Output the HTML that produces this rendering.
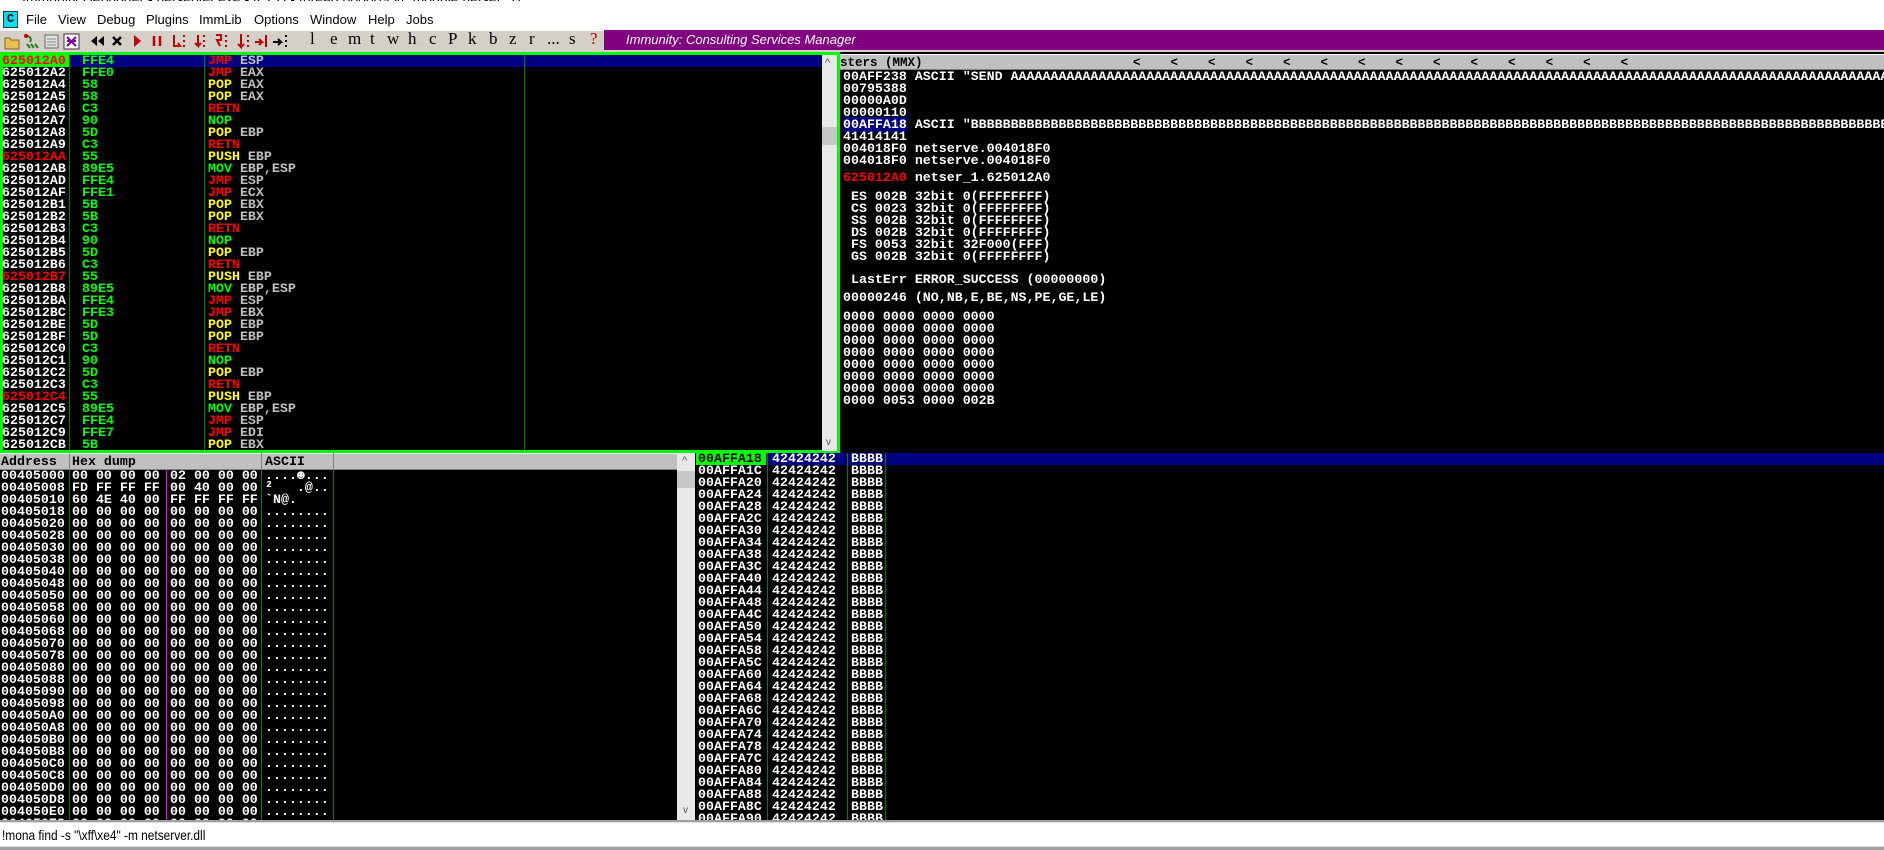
<!DOCTYPE html>
<html><head><meta charset="utf-8"><style>
*{margin:0;padding:0;box-sizing:border-box}
body{width:1884px;height:850px;overflow:hidden;background:#fff;position:relative;font-family:"Liberation Mono",monospace;}
.abs{position:absolute}
.mono{font-family:"Liberation Mono",monospace;font-weight:bold;font-size:13.3px;line-height:12px;white-space:pre;color:#fff}
.lst{white-space:normal}
.r{position:relative;height:12px}
.r b{position:absolute;top:0;font-weight:bold;white-space:pre}
.W{color:#fff}.G{color:#00ff00}.R{color:#ff0000}.Y{color:#ffff00}.L{color:#c0c0c0}
#dis .a{left:2px}#dis .h{left:82px}#dis .i{left:208px}
#hex .a{left:1px}#hex .g1{left:72px}#hex .g2{left:170px}#hex .s{left:265px}
#stk .a{left:698px}#stk .v{left:772px}#stk .t{left:851px}
.menu span{position:absolute;top:12px;font-family:"Liberation Sans",sans-serif;font-size:13px;color:#000}
.tb{position:absolute;top:29px;font-family:"Liberation Serif",serif;font-size:17px;color:#000}
</style></head><body>
<div class="abs" style="left:0;top:-9px;height:10px;width:1884px;overflow:hidden;font-family:'Liberation Sans',sans-serif;font-size:14px;color:#000;line-height:16px;padding-left:22px">Immunity Debugger - netserver.exe - [CPU - thread 00000934, module netser_1]</div>
<div class="abs menu" style="left:0;top:0;width:1884px;height:30px">
<div class="abs" style="left:3px;top:11px;width:15px;height:17px;background:#00e0f0;border:1px solid #333;font:bold 12px 'Liberation Mono';text-align:center;line-height:15px;color:#000">C</div>
<span style="left:26px">File</span><span style="left:58px">View</span><span style="left:97px">Debug</span><span style="left:146px">Plugins</span><span style="left:199px">ImmLib</span><span style="left:254px">Options</span><span style="left:310px">Window</span><span style="left:368px">Help</span><span style="left:406px">Jobs</span>
</div>
<div class="abs" style="left:0;top:30px;width:1884px;height:22px;background:#d4d0c8;border-top:1px solid #fff"></div>
<svg class="abs" style="left:0;top:30px" width="300" height="22">
<path d="M5 8h5l1 2h8v9H5z" fill="#e8c050" stroke="#806020"/>
<path d="M26 6c4 0 6 3 4 6M27 14l3 4M31 14l3 4M35 14l3 4" stroke="#208020" stroke-width="2" fill="none"/><circle cx="26" cy="6" r="2" fill="#c00"/>
<rect x="45" y="5" width="13" height="13" fill="#e0e0e0" stroke="#666"/><path d="M47 9h9M47 12h9M47 15h9" stroke="#888"/>
<rect x="64" y="4" width="15" height="15" fill="#fff" stroke="#333"/><path d="M67 7l9 9M76 7l-9 9M67 11h9" stroke="#8000a0" stroke-width="2"/>
<path d="M97 6l-6 5 6 5zM104 6l-6 5 6 5z" fill="#000"/>
<path d="M113 7l8 8M121 7l-8 8" stroke="#000" stroke-width="2.5"/>
<path d="M134 5l7 6-7 6z" fill="#c00000"/>
<path d="M154 6v10M160 6v10" stroke="#c00000" stroke-width="2.5"/>
<path d="M174 5v11h6l-2-3M184 5v2M184 10v2M184 15v2" stroke="#c00000" stroke-width="2" fill="none"/>
<path d="M198 5v11l-3-3M198 16l3-3M204 5v2M204 10v2M204 15v2" stroke="#c00000" stroke-width="2" fill="none"/>
<path d="M216 5h5v5h-4l3 6M226 5v2M226 10v2M226 15v2" stroke="#c00000" stroke-width="2" fill="none"/>
<path d="M241 4v13l-3-3M241 17l3-3M248 5v2M248 10v2M248 15v2" stroke="#c00000" stroke-width="2" fill="none"/>
<path d="M255 12h7l-3-3M262 12l-3 3M266 5v12" stroke="#c00000" stroke-width="2" fill="none"/>
<path d="M273 12h8l-3-3M281 12l-3 3M286 5v2M286 10v2M286 15v2" stroke="#000" stroke-width="2" fill="none"/>
</svg>
<span class="tb" style="left:310px">l</span><span class="tb" style="left:330px">e</span><span class="tb" style="left:348px">m</span><span class="tb" style="left:370px">t</span><span class="tb" style="left:387px">w</span><span class="tb" style="left:408px">h</span><span class="tb" style="left:429px">c</span><span class="tb" style="left:448px">P</span><span class="tb" style="left:468px">k</span><span class="tb" style="left:489px">b</span><span class="tb" style="left:509px">z</span><span class="tb" style="left:529px">r</span><span class="tb" style="left:547px">...</span><span class="tb" style="left:569px">s</span><span class="tb" style="left:590px;color:#c00000">?</span>
<div class="abs" style="left:604px;top:30px;width:1280px;height:20px;background:#800080;color:#fff;font:italic 13px 'Liberation Sans',sans-serif;line-height:20px;padding-left:22px">Immunity: Consulting Services Manager</div>

<div class="abs" style="left:0;top:52px;width:1884px;height:768px;background:#000"></div>
<div class="abs" style="left:0;top:52px;width:840px;height:401px;border:3px solid #00ff00"></div>
<div class="abs" style="left:0;top:55px;width:822px;height:12px;background:#000080"></div>
<div class="abs" style="left:0;top:55px;width:69px;height:12px;background:#00ff00"></div>
<div class="abs" style="left:69px;top:55px;width:1px;height:396px;background:#008000"></div>
<div class="abs" style="left:204px;top:55px;width:1px;height:396px;background:#008000"></div>
<div class="abs" style="left:524px;top:55px;width:1px;height:396px;background:#008000"></div>
<div class="abs" style="left:822px;top:55px;width:15px;height:396px;background:#e8e8e8"></div>
<div class="abs" style="left:822px;top:127px;width:15px;height:18px;background:#c8c8c8"></div>
<div class="abs" style="left:825px;top:57px;font:11px 'Liberation Sans';color:#555">^</div>
<div class="abs" style="left:826px;top:437px;font:10px 'Liberation Sans';color:#555">v</div>

<div id="dis" class="abs mono lst" style="left:0;top:55px;width:820px;height:396px;overflow:hidden"><div class="r"><b class="a R">625012A0</b><b class="h G">FFE4</b><b class="i"><span class="R">JMP</span> <span class="L">ESP</span></b></div><div class="r"><b class="a">625012A2</b><b class="h G">FFE0</b><b class="i"><span class="R">JMP</span> <span class="L">EAX</span></b></div><div class="r"><b class="a">625012A4</b><b class="h G">58</b><b class="i"><span class="Y">POP</span> <span class="L">EAX</span></b></div><div class="r"><b class="a">625012A5</b><b class="h G">58</b><b class="i"><span class="Y">POP</span> <span class="L">EAX</span></b></div><div class="r"><b class="a">625012A6</b><b class="h G">C3</b><b class="i"><span class="R">RETN</span></b></div><div class="r"><b class="a">625012A7</b><b class="h G">90</b><b class="i"><span class="G">NOP</span></b></div><div class="r"><b class="a">625012A8</b><b class="h G">5D</b><b class="i"><span class="Y">POP</span> <span class="L">EBP</span></b></div><div class="r"><b class="a">625012A9</b><b class="h G">C3</b><b class="i"><span class="R">RETN</span></b></div><div class="r"><b class="a R">625012AA</b><b class="h G">55</b><b class="i"><span class="Y">PUSH</span> <span class="L">EBP</span></b></div><div class="r"><b class="a">625012AB</b><b class="h G">89E5</b><b class="i"><span class="G">MOV</span> <span class="L">EBP,ESP</span></b></div><div class="r"><b class="a">625012AD</b><b class="h G">FFE4</b><b class="i"><span class="R">JMP</span> <span class="L">ESP</span></b></div><div class="r"><b class="a">625012AF</b><b class="h G">FFE1</b><b class="i"><span class="R">JMP</span> <span class="L">ECX</span></b></div><div class="r"><b class="a">625012B1</b><b class="h G">5B</b><b class="i"><span class="Y">POP</span> <span class="L">EBX</span></b></div><div class="r"><b class="a">625012B2</b><b class="h G">5B</b><b class="i"><span class="Y">POP</span> <span class="L">EBX</span></b></div><div class="r"><b class="a">625012B3</b><b class="h G">C3</b><b class="i"><span class="R">RETN</span></b></div><div class="r"><b class="a">625012B4</b><b class="h G">90</b><b class="i"><span class="G">NOP</span></b></div><div class="r"><b class="a">625012B5</b><b class="h G">5D</b><b class="i"><span class="Y">POP</span> <span class="L">EBP</span></b></div><div class="r"><b class="a">625012B6</b><b class="h G">C3</b><b class="i"><span class="R">RETN</span></b></div><div class="r"><b class="a R">625012B7</b><b class="h G">55</b><b class="i"><span class="Y">PUSH</span> <span class="L">EBP</span></b></div><div class="r"><b class="a">625012B8</b><b class="h G">89E5</b><b class="i"><span class="G">MOV</span> <span class="L">EBP,ESP</span></b></div><div class="r"><b class="a">625012BA</b><b class="h G">FFE4</b><b class="i"><span class="R">JMP</span> <span class="L">ESP</span></b></div><div class="r"><b class="a">625012BC</b><b class="h G">FFE3</b><b class="i"><span class="R">JMP</span> <span class="L">EBX</span></b></div><div class="r"><b class="a">625012BE</b><b class="h G">5D</b><b class="i"><span class="Y">POP</span> <span class="L">EBP</span></b></div><div class="r"><b class="a">625012BF</b><b class="h G">5D</b><b class="i"><span class="Y">POP</span> <span class="L">EBP</span></b></div><div class="r"><b class="a">625012C0</b><b class="h G">C3</b><b class="i"><span class="R">RETN</span></b></div><div class="r"><b class="a">625012C1</b><b class="h G">90</b><b class="i"><span class="G">NOP</span></b></div><div class="r"><b class="a">625012C2</b><b class="h G">5D</b><b class="i"><span class="Y">POP</span> <span class="L">EBP</span></b></div><div class="r"><b class="a">625012C3</b><b class="h G">C3</b><b class="i"><span class="R">RETN</span></b></div><div class="r"><b class="a R">625012C4</b><b class="h G">55</b><b class="i"><span class="Y">PUSH</span> <span class="L">EBP</span></b></div><div class="r"><b class="a">625012C5</b><b class="h G">89E5</b><b class="i"><span class="G">MOV</span> <span class="L">EBP,ESP</span></b></div><div class="r"><b class="a">625012C7</b><b class="h G">FFE4</b><b class="i"><span class="R">JMP</span> <span class="L">ESP</span></b></div><div class="r"><b class="a">625012C9</b><b class="h G">FFE7</b><b class="i"><span class="R">JMP</span> <span class="L">EDI</span></b></div><div class="r"><b class="a">625012CB</b><b class="h G">5B</b><b class="i"><span class="Y">POP</span> <span class="L">EBX</span></b></div></div>

<div class="abs" style="left:840px;top:54px;width:1044px;height:16px;background:#c0c0c0;border-top:1px solid #fff;border-bottom:1px solid #808080"></div>
<div class="abs mono" style="left:840px;top:57px;color:#000;font-size:12.5px">sters (MMX)</div>
<div class="abs mono" style="left:1133px;top:57px;color:#000;font-size:12.5px">&lt;    &lt;    &lt;    &lt;    &lt;    &lt;    &lt;    &lt;    &lt;    &lt;    &lt;    &lt;    &lt;    &lt;</div>
<div class="abs mono" style="left:843px;top:71px;width:1041px;overflow:hidden">00AFF238 ASCII "SEND AAAAAAAAAAAAAAAAAAAAAAAAAAAAAAAAAAAAAAAAAAAAAAAAAAAAAAAAAAAAAAAAAAAAAAAAAAAAAAAAAAAAAAAAAAAAAAAAAAAAAAAAAAAAAAA
00795388
00000A0D
00000110
<span style="background:#000080">00AFFA18</span> ASCII "BBBBBBBBBBBBBBBBBBBBBBBBBBBBBBBBBBBBBBBBBBBBBBBBBBBBBBBBBBBBBBBBBBBBBBBBBBBBBBBBBBBBBBBBBBBBBBBBBBBBBBBBBBBBBBBBBBBBBBBBBBBBB
41414141
004018F0 netserve.004018F0
004018F0 netserve.004018F0</div>
<div class="abs mono" style="left:843px;top:172px"><span class="R">625012A0</span> netser_1.625012A0</div>
<div class="abs mono" style="left:843px;top:191px"> ES 002B 32bit 0(FFFFFFFF)
 CS 0023 32bit 0(FFFFFFFF)
 SS 002B 32bit 0(FFFFFFFF)
 DS 002B 32bit 0(FFFFFFFF)
 FS 0053 32bit 32F000(FFF)
 GS 002B 32bit 0(FFFFFFFF)</div>
<div class="abs mono" style="left:843px;top:274px"> LastErr ERROR_SUCCESS (00000000)</div>
<div class="abs mono" style="left:843px;top:292px">00000246 (NO,NB,E,BE,NS,PE,GE,LE)</div>
<div class="abs mono" style="left:843px;top:311px">0000 0000 0000 0000
0000 0000 0000 0000
0000 0000 0000 0000
0000 0000 0000 0000
0000 0000 0000 0000
0000 0000 0000 0000
0000 0000 0000 0000
0000 0053 0000 002B</div>

<div class="abs" style="left:0;top:453px;width:677px;height:17px;background:#c0c0c0;border-top:1px solid #fff;border-bottom:1px solid #808080"></div>
<div class="abs" style="left:69px;top:453px;width:1px;height:17px;background:#808080"></div>
<div class="abs" style="left:261px;top:453px;width:1px;height:17px;background:#808080"></div>
<div class="abs" style="left:333px;top:453px;width:1px;height:17px;background:#808080"></div>
<div class="abs mono" style="left:1px;top:456px;color:#000">Address</div>
<div class="abs mono" style="left:72px;top:456px;color:#000">Hex dump</div>
<div class="abs mono" style="left:265px;top:456px;color:#000">ASCII</div>
<div class="abs" style="left:69px;top:470px;width:1px;height:350px;background:#008000"></div>
<div class="abs" style="left:166px;top:470px;width:1px;height:350px;background:#ff00ff"></div>
<div class="abs" style="left:261px;top:470px;width:1px;height:350px;background:#008000"></div>
<div class="abs" style="left:333px;top:470px;width:1px;height:350px;background:#008000"></div>
<div id="hex" class="abs mono lst" style="left:0;top:470px;width:677px;height:350px;overflow:hidden"><div class="r"><b class="a">00405000</b><b class="g1">00 00 00 00</b><b class="g2">02 00 00 00</b><b class="s">....☻...</b></div><div class="r"><b class="a">00405008</b><b class="g1">FD FF FF FF</b><b class="g2">00 40 00 00</b><b class="s">²   .@..</b></div><div class="r"><b class="a">00405010</b><b class="g1">60 4E 40 00</b><b class="g2">FF FF FF FF</b><b class="s">`N@.</b></div><div class="r"><b class="a">00405018</b><b class="g1">00 00 00 00</b><b class="g2">00 00 00 00</b><b class="s">........</b></div><div class="r"><b class="a">00405020</b><b class="g1">00 00 00 00</b><b class="g2">00 00 00 00</b><b class="s">........</b></div><div class="r"><b class="a">00405028</b><b class="g1">00 00 00 00</b><b class="g2">00 00 00 00</b><b class="s">........</b></div><div class="r"><b class="a">00405030</b><b class="g1">00 00 00 00</b><b class="g2">00 00 00 00</b><b class="s">........</b></div><div class="r"><b class="a">00405038</b><b class="g1">00 00 00 00</b><b class="g2">00 00 00 00</b><b class="s">........</b></div><div class="r"><b class="a">00405040</b><b class="g1">00 00 00 00</b><b class="g2">00 00 00 00</b><b class="s">........</b></div><div class="r"><b class="a">00405048</b><b class="g1">00 00 00 00</b><b class="g2">00 00 00 00</b><b class="s">........</b></div><div class="r"><b class="a">00405050</b><b class="g1">00 00 00 00</b><b class="g2">00 00 00 00</b><b class="s">........</b></div><div class="r"><b class="a">00405058</b><b class="g1">00 00 00 00</b><b class="g2">00 00 00 00</b><b class="s">........</b></div><div class="r"><b class="a">00405060</b><b class="g1">00 00 00 00</b><b class="g2">00 00 00 00</b><b class="s">........</b></div><div class="r"><b class="a">00405068</b><b class="g1">00 00 00 00</b><b class="g2">00 00 00 00</b><b class="s">........</b></div><div class="r"><b class="a">00405070</b><b class="g1">00 00 00 00</b><b class="g2">00 00 00 00</b><b class="s">........</b></div><div class="r"><b class="a">00405078</b><b class="g1">00 00 00 00</b><b class="g2">00 00 00 00</b><b class="s">........</b></div><div class="r"><b class="a">00405080</b><b class="g1">00 00 00 00</b><b class="g2">00 00 00 00</b><b class="s">........</b></div><div class="r"><b class="a">00405088</b><b class="g1">00 00 00 00</b><b class="g2">00 00 00 00</b><b class="s">........</b></div><div class="r"><b class="a">00405090</b><b class="g1">00 00 00 00</b><b class="g2">00 00 00 00</b><b class="s">........</b></div><div class="r"><b class="a">00405098</b><b class="g1">00 00 00 00</b><b class="g2">00 00 00 00</b><b class="s">........</b></div><div class="r"><b class="a">004050A0</b><b class="g1">00 00 00 00</b><b class="g2">00 00 00 00</b><b class="s">........</b></div><div class="r"><b class="a">004050A8</b><b class="g1">00 00 00 00</b><b class="g2">00 00 00 00</b><b class="s">........</b></div><div class="r"><b class="a">004050B0</b><b class="g1">00 00 00 00</b><b class="g2">00 00 00 00</b><b class="s">........</b></div><div class="r"><b class="a">004050B8</b><b class="g1">00 00 00 00</b><b class="g2">00 00 00 00</b><b class="s">........</b></div><div class="r"><b class="a">004050C0</b><b class="g1">00 00 00 00</b><b class="g2">00 00 00 00</b><b class="s">........</b></div><div class="r"><b class="a">004050C8</b><b class="g1">00 00 00 00</b><b class="g2">00 00 00 00</b><b class="s">........</b></div><div class="r"><b class="a">004050D0</b><b class="g1">00 00 00 00</b><b class="g2">00 00 00 00</b><b class="s">........</b></div><div class="r"><b class="a">004050D8</b><b class="g1">00 00 00 00</b><b class="g2">00 00 00 00</b><b class="s">........</b></div><div class="r"><b class="a">004050E0</b><b class="g1">00 00 00 00</b><b class="g2">00 00 00 00</b><b class="s">........</b></div><div class="r"><b class="a">004050E8</b><b class="g1">00 00 00 00</b><b class="g2">00 00 00 00</b><b class="s">........</b></div></div>

<div class="abs" style="left:677px;top:453px;width:18px;height:367px;background:#e8e8e8"></div>
<div class="abs" style="left:677px;top:471px;width:18px;height:17px;background:#c8c8c8"></div>
<div class="abs" style="left:682px;top:455px;font:11px 'Liberation Sans';color:#555">^</div>
<div class="abs" style="left:683px;top:805px;font:10px 'Liberation Sans';color:#555">v</div>
<div class="abs" style="left:696px;top:453px;width:1188px;height:12px;background:#000080"></div>
<div class="abs" style="left:696px;top:453px;width:70px;height:12px;background:#00ff00"></div>
<div class="abs" style="left:767px;top:453px;width:1px;height:367px;background:#008000"></div>
<div class="abs" style="left:847px;top:453px;width:1px;height:367px;background:#008000"></div>
<div class="abs" style="left:885px;top:453px;width:1px;height:367px;background:#008000"></div>
<div id="stk" class="abs mono lst" style="left:0;top:453px;width:1884px;height:367px;overflow:hidden"><div class="r"><b class="a" style="color:#000">00AFFA18</b><b class="v">42424242</b><b class="t">BBBB</b></div><div class="r"><b class="a">00AFFA1C</b><b class="v">42424242</b><b class="t">BBBB</b></div><div class="r"><b class="a">00AFFA20</b><b class="v">42424242</b><b class="t">BBBB</b></div><div class="r"><b class="a">00AFFA24</b><b class="v">42424242</b><b class="t">BBBB</b></div><div class="r"><b class="a">00AFFA28</b><b class="v">42424242</b><b class="t">BBBB</b></div><div class="r"><b class="a">00AFFA2C</b><b class="v">42424242</b><b class="t">BBBB</b></div><div class="r"><b class="a">00AFFA30</b><b class="v">42424242</b><b class="t">BBBB</b></div><div class="r"><b class="a">00AFFA34</b><b class="v">42424242</b><b class="t">BBBB</b></div><div class="r"><b class="a">00AFFA38</b><b class="v">42424242</b><b class="t">BBBB</b></div><div class="r"><b class="a">00AFFA3C</b><b class="v">42424242</b><b class="t">BBBB</b></div><div class="r"><b class="a">00AFFA40</b><b class="v">42424242</b><b class="t">BBBB</b></div><div class="r"><b class="a">00AFFA44</b><b class="v">42424242</b><b class="t">BBBB</b></div><div class="r"><b class="a">00AFFA48</b><b class="v">42424242</b><b class="t">BBBB</b></div><div class="r"><b class="a">00AFFA4C</b><b class="v">42424242</b><b class="t">BBBB</b></div><div class="r"><b class="a">00AFFA50</b><b class="v">42424242</b><b class="t">BBBB</b></div><div class="r"><b class="a">00AFFA54</b><b class="v">42424242</b><b class="t">BBBB</b></div><div class="r"><b class="a">00AFFA58</b><b class="v">42424242</b><b class="t">BBBB</b></div><div class="r"><b class="a">00AFFA5C</b><b class="v">42424242</b><b class="t">BBBB</b></div><div class="r"><b class="a">00AFFA60</b><b class="v">42424242</b><b class="t">BBBB</b></div><div class="r"><b class="a">00AFFA64</b><b class="v">42424242</b><b class="t">BBBB</b></div><div class="r"><b class="a">00AFFA68</b><b class="v">42424242</b><b class="t">BBBB</b></div><div class="r"><b class="a">00AFFA6C</b><b class="v">42424242</b><b class="t">BBBB</b></div><div class="r"><b class="a">00AFFA70</b><b class="v">42424242</b><b class="t">BBBB</b></div><div class="r"><b class="a">00AFFA74</b><b class="v">42424242</b><b class="t">BBBB</b></div><div class="r"><b class="a">00AFFA78</b><b class="v">42424242</b><b class="t">BBBB</b></div><div class="r"><b class="a">00AFFA7C</b><b class="v">42424242</b><b class="t">BBBB</b></div><div class="r"><b class="a">00AFFA80</b><b class="v">42424242</b><b class="t">BBBB</b></div><div class="r"><b class="a">00AFFA84</b><b class="v">42424242</b><b class="t">BBBB</b></div><div class="r"><b class="a">00AFFA88</b><b class="v">42424242</b><b class="t">BBBB</b></div><div class="r"><b class="a">00AFFA8C</b><b class="v">42424242</b><b class="t">BBBB</b></div><div class="r"><b class="a">00AFFA90</b><b class="v">42424242</b><b class="t">BBBB</b></div></div>

<div class="abs" style="left:0;top:820px;width:1884px;height:3px;background:#a0a0a0;border-bottom:1px solid #e0e0e0"></div>
<div class="abs" style="left:0;top:823px;width:1884px;height:23px;background:#fff"></div>
<div class="abs" style="left:2px;top:827px;font:14px 'Liberation Sans Narrow','Liberation Sans',sans-serif;color:#000;transform:scaleX(0.85);transform-origin:left;white-space:pre">!mona find -s "\xff\xe4" -m netserver.dll</div>
<div class="abs" style="left:0;top:846px;width:1884px;height:4px;background:#a0a0a0;border-top:1px solid #e0e0e0"></div>
</body></html>
